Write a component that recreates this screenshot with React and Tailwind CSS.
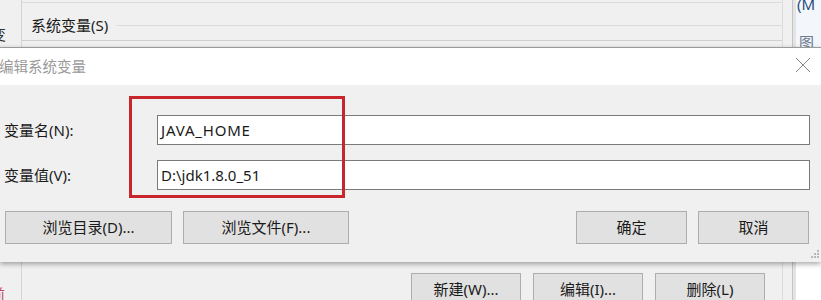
const font = { fontFamily: '"Noto Sans", "Noto Sans CJK SC", sans-serif' };

function WinButton({ className = '', children }) {
  return (
    <div className={`flex items-center justify-center bg-[#e1e1e1] border border-[#adadad] text-[15px] text-[#1a1a1a] leading-none ${className}`}>
      {children}
    </div>
  );
}

function Field({ label, value, valueClass = '' }) {
  return (
    <div className="flex items-center h-[30px]">
      <div className="w-[153px] text-[15px] text-[#1a1a1a] leading-none">{label}</div>
      <div className={`w-[653px] h-[30px] bg-white border border-[#7a7a7a] flex items-center pl-[3px] text-[15px] text-[#1a1a1a] leading-none ${valueClass}`}>
        {value}
      </div>
    </div>
  );
}

function EditDialog() {
  return (
    <div className="absolute left-0 top-[47px] w-[821px] h-[215px] flex flex-col border-t border-[#9a9a9a] shadow-[0_2px_5px_rgba(0,0,0,0.35)]">
      {/* title bar */}
      <div className="h-[37px] bg-white flex items-center justify-between">
        <span className="text-[14.5px] text-[#9a9a9a] leading-none -ml-[1px]">编辑系统变量</span>
        <svg width="16" height="16" viewBox="0 0 16 16" className="mr-[10px] -mt-[3px]" stroke="#8a8a8a" strokeWidth="1">
          <path d="M1 1L15 15M15 1L1 15" />
        </svg>
      </div>

      {/* body */}
      <div className="relative flex-1 bg-[#f0f0f0] pl-[4px] pt-[30px]">
        <div className="flex flex-col gap-[15px]">
          <Field label="变量名(N):" value="JAVA_HOME" valueClass="tracking-[0.8px]" />
          <Field label="变量值(V):" value="D:\jdk1.8.0_51" />
        </div>

        <div className="flex items-center mt-[21px] pl-[1px]">
          <WinButton className="w-[167px] h-[33px]">浏览目录(D)...</WinButton>
          <WinButton className="w-[166px] h-[33px] ml-[11px]">浏览文件(F)...</WinButton>
          <WinButton className="w-[111px] h-[33px] ml-[227px]">确定</WinButton>
          <WinButton className="w-[111px] h-[33px] ml-[11px]">取消</WinButton>
        </div>

        {/* annotation box */}
        <div className="absolute left-[129px] top-[11px] w-[216px] h-[102px] border-[3px] border-[#c9252c]" />

        {/* resize grip */}
        <svg width="9" height="9" viewBox="0 0 9 9" className="absolute right-[1px] bottom-[3px]" fill="#b8b8b8">
          <rect x="6" y="0" width="2" height="2" />
          <rect x="3" y="3" width="2" height="2" />
          <rect x="6" y="3" width="2" height="2" />
          <rect x="0" y="6" width="2" height="2" />
          <rect x="3" y="6" width="2" height="2" />
          <rect x="6" y="6" width="2" height="2" />
        </svg>
      </div>
    </div>
  );
}

function BackWindow() {
  return (
    <div className="absolute inset-0 flex">
      {/* left strip */}
      <div className="w-[22px] border-r border-[#d4d4d4] flex flex-col overflow-hidden">
        <div className="h-[27px]" />
        <span className="text-[15px] leading-none text-[#333] -ml-[9px]">变</span>
        <div className="flex-1" />
        <span className="text-[15px] leading-none text-[#c44a5a] -ml-[10px] mb-[-2px]">前</span>
      </div>

      {/* main area */}
      <div className="w-[761px] flex flex-col border-r border-[#dcdcdc]">
        <div className="h-[3px] border-b border-[#dcdcdc]" />
        <div className="flex items-center h-[37px] pt-[8px]">
          <span className="text-[15px] leading-none text-[#1a1a1a] ml-[9px]">系统变量(S)</span>
          <div className="flex-1 ml-[8px] border-t border-[#dcdcdc]" />
        </div>
        <div className="border-b border-[#d0d0d0]" />
        <div className="flex-1" />
        <div className="flex items-start h-[27px] pl-[389px] gap-[12px]">
          <WinButton className="w-[110px] h-[32px]">新建(W)...</WinButton>
          <WinButton className="w-[110px] h-[32px]">编辑(I)...</WinButton>
          <WinButton className="w-[110px] h-[32px]">删除(L)</WinButton>
        </div>
      </div>

      {/* gap column */}
      <div className="w-[10px] border-r border-[#c4c4c4]" />
      <div className="w-[3px] bg-[#e4e4e4]" />

      {/* right window fragment */}
      <div className="flex-1 bg-[#f3f6fb] flex flex-col overflow-hidden">
        <span className="text-[15px] leading-none text-[#2b4a7a] -mt-[3px] ml-[1px]">(M</span>
        <span className="text-[15px] leading-none text-[#6a7a90] mt-[23px] ml-[3px]">图</span>
        <div className="flex-1 bg-white mt-[2px]" />
      </div>
    </div>
  );
}

export default function App() {
  return (
    <div className="relative w-[821px] h-[300px] overflow-hidden bg-[#f0f0f0]" style={font}>
      <BackWindow />
      <EditDialog />
    </div>
  );
}
